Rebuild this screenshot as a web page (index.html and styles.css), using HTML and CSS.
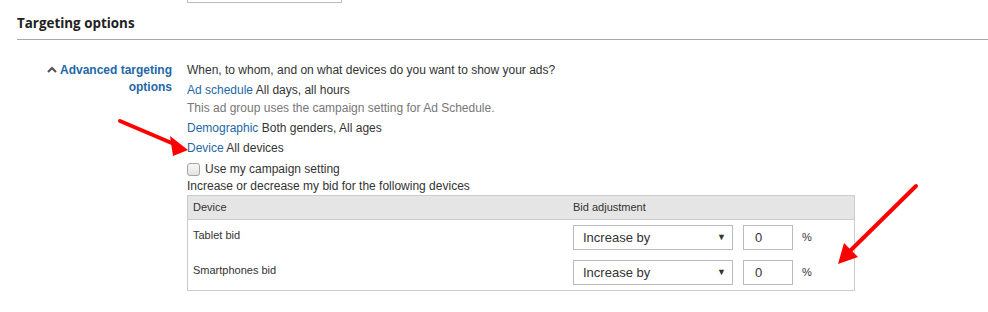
FILE: index.html
```html
<!DOCTYPE html>
<html>
<head>
<meta charset="utf-8">
<link rel="stylesheet" href="styles.css">
</head>
<body>
<div class="page">
  <div class="top-box"></div>
  <h2 class="section-title">Targeting options</h2>
  <div class="rule"></div>
  <div class="adv">
    <div class="adv-label">
      <a class="adv-link"><svg class="chev" width="10" height="7" viewBox="0 0 10 7"><path d="M1 6 L5 2 L9 6" fill="none" stroke="#555" stroke-width="2.2"/></svg>Advanced targeting options</a>
    </div>
    <div class="adv-body">
      <div class="line">When, to whom, and on what devices do you want to show your ads?</div>
      <div class="line gap"><a class="lnk">Ad schedule</a> All days, all hours</div>
      <div class="line muted">This ad group uses the campaign setting for Ad Schedule.</div>
      <div class="line gap"><a class="lnk">Demographic</a> Both genders, All ages</div>
      <div class="line gap"><a class="lnk">Device</a> All devices</div>
      <label class="check-row"><span class="checkbox"></span><span>Use my campaign setting</span></label>
      <div class="line">Increase or decrease my bid for the following devices</div>
      <div class="bid-table">
        <div class="bt-head">
          <div class="c1">Device</div>
          <div class="c2">Bid adjustment</div>
        </div>
        <div class="bt-row">
          <div class="c1 rowlabel">Tablet bid</div>
          <div class="c2 ctrls">
            <div class="select"><span>Increase by</span><span class="tri">&#9660;</span></div>
            <div class="num">0</div>
            <span class="pct">%</span>
          </div>
        </div>
        <div class="bt-row">
          <div class="c1 rowlabel">Smartphones bid</div>
          <div class="c2 ctrls">
            <div class="select"><span>Increase by</span><span class="tri">&#9660;</span></div>
            <div class="num">0</div>
            <span class="pct">%</span>
          </div>
        </div>
      </div>
    </div>
  </div>
  <svg class="arrows" width="988" height="312" viewBox="0 0 988 312">
    <line x1="120" y1="121" x2="174" y2="144" stroke="#f00" stroke-width="4" stroke-linecap="round"/>
    <polygon points="188,150 170,136 173,156" fill="#f00"/>
    <line x1="916" y1="186" x2="851" y2="250" stroke="#f00" stroke-width="4" stroke-linecap="round"/>
    <polygon points="838,264 844,243 858,257" fill="#f00"/>
  </svg>
</div>
</body>
</html>
```
FILE: styles.css
```css
html, body {
  margin: 0;
  padding: 0;
  background: #fff;
}
.page {
  position: relative;
  width: 988px;
  height: 312px;
  overflow: hidden;
  font-family: "Liberation Sans", Arial, sans-serif;
  font-size: 12px;
  color: #333;
}
.top-box {
  margin-left: 187px;
  width: 153px;
  height: 2px;
  border: 1px solid #bbb;
  border-top: none;
}
.section-title {
  margin: 11px 0 0 17px;
  font-family: "Open Sans", sans-serif;
  font-weight: 700;
  font-size: 13.4px;
  line-height: 18px;
  color: #222;
}
.rule {
  margin: 7px 0 0 17px;
  height: 1px;
  background: #a8a8a8;
}
.adv {
  display: flex;
  gap: 15px;
  margin: 22px 0 0 17px;
}
.adv-label {
  width: 155px;
  flex: none;
  text-align: right;
  font-weight: 700;
  line-height: 17px;
}
.adv-link {
  color: #2467a8;
}
.chev {
  margin-right: 3px;
  vertical-align: 1px;
}
.adv-body {
  display: flex;
  flex-direction: column;
  line-height: 17px;
}
.line.gap {
  margin-top: 3px;
}
.line.muted {
  margin-top: 1px;
}
.lnk {
  color: #2467a8;
}
.muted {
  color: #777;
}
.check-row {
  display: flex;
  align-items: center;
  gap: 5px;
  margin-top: 3px;
  height: 18px;
}
.checkbox {
  width: 11px;
  height: 11px;
  border: 1px solid #a3a3a3;
  border-radius: 3px;
  background: linear-gradient(#f8f8f8, #e3e3e3);
}
.bid-table {
  width: 666px;
  border: 1px solid #ccc;
  margin-top: 0;
}
.bt-head {
  display: flex;
  height: 23px;
  align-items: center;
  background: #e5e5e5;
  border-bottom: 1px solid #ccc;
  font-size: 11px;
}
.c1 {
  width: 380px;
  padding-left: 5px;
  box-sizing: border-box;
  flex: none;
}
.c2 {
  padding-left: 5px;
}
.bt-row {
  display: flex;
  height: 35px;
  font-size: 11px;
}
.rowlabel {
  padding-top: 7px;
}
.ctrls {
  display: flex;
  align-items: flex-start;
  padding-top: 5px;
}
.select {
  width: 143px;
  height: 23px;
  border: 1px solid #bbb;
  display: flex;
  align-items: center;
  justify-content: space-between;
  padding: 0 6px 0 9px;
  font-size: 13px;
  color: #333;
}
.tri {
  font-size: 9px;
  color: #333;
}
.num {
  margin-left: 10px;
  width: 50px;
  height: 25px;
  border: 1px solid #bbb;
  font-size: 13px;
  line-height: 23px;
  padding-left: 11px;
  box-sizing: border-box;
}
.pct {
  margin-left: 9px;
  font-size: 11px;
  line-height: 25px;
}
.arrows {
  position: absolute;
  left: 0;
  top: 0;
  pointer-events: none;
}
```
